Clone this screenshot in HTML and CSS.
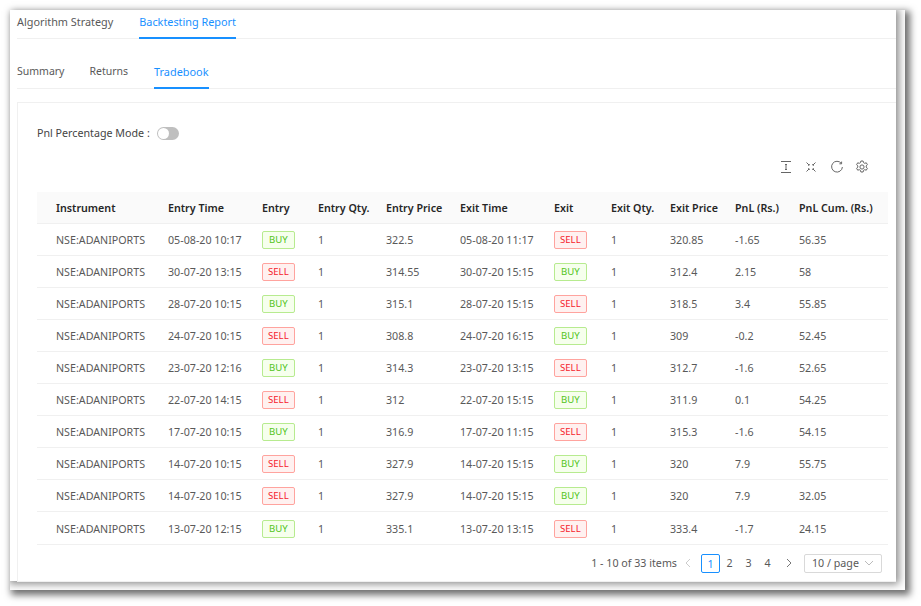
FILE: index.html
```html
<!DOCTYPE html>
<html lang="en">
<head>
  <meta charset="utf-8">
  <title>Tradebook</title>
  <link rel="stylesheet" href="styles.css">
</head>
<body>
  <div class="frame">
    <div class="window">
      <div class="tabs tabs-main">
        <a class="tab">Algorithm Strategy</a>
        <a class="tab active">Backtesting Report</a>
      </div>
      <div class="tabs tabs-sub">
        <a class="tab">Summary</a>
        <a class="tab">Returns</a>
        <a class="tab active">Tradebook</a>
      </div>
      <div class="card">
        <div class="mode-row">
          <span class="mode-label">Pnl Percentage Mode</span>
          <span class="colon">:</span>
          <span class="switch"><span class="knob"></span></span>
        </div>
        <div class="toolbar">
          <svg viewBox="0 0 14 14"><path d="M2 1.500h10M2 12.500h10M7 4v6M6 5l1-1 1 1M6 9l1 1 1-1"/></svg>
          <svg viewBox="0 0 14 14"><path d="M2.500 2.500l2.500 2.500M11.500 2.500 9 5M2.500 11.500 5 9M11.500 11.500 9 9M4 5.200h1.200V4M10 5.200H8.800V4M4 8.800h1.200V10M10 8.800H8.800V10"/></svg>
          <svg viewBox="0 0 14 14"><path d="M11.300 3.400A5.400 5.400 0 1 0 12.400 7M11.600 1.600v2.200H9.400"/></svg>
          <svg viewBox="0 0 14 14"><path d="M5.900 1h2.200l.4 1.600 1.200.7 1.600-.5 1.100 1.900-1.200 1.200v1.200l1.200 1.200-1.100 1.900-1.600-.5-1.200.7-.4 1.600H5.900l-.4-1.600-1.200-.7-1.600.5-1.100-1.900 1.200-1.200V5.900L1.600 4.700l1.100-1.900 1.600.5 1.200-.7z"/><circle cx="7" cy="7" r="2.100"/></svg>
        </div>
        <table class="trades">
          <thead>
            <tr><th>Instrument</th><th>Entry Time</th><th>Entry</th><th>Entry Qty.</th><th>Entry Price</th><th>Exit Time</th><th>Exit</th><th>Exit Qty.</th><th>Exit Price</th><th>PnL (Rs.)</th><th>PnL Cum. (Rs.)</th></tr>
          </thead>
          <tbody>
            <tr><td>NSE:ADANIPORTS</td><td>05-08-20 10:17</td><td><span class="tag buy">BUY</span></td><td>1</td><td>322.5</td><td>05-08-20 11:17</td><td><span class="tag sell">SELL</span></td><td>1</td><td>320.85</td><td>-1.65</td><td>56.35</td></tr>
            <tr><td>NSE:ADANIPORTS</td><td>30-07-20 13:15</td><td><span class="tag sell">SELL</span></td><td>1</td><td>314.55</td><td>30-07-20 15:15</td><td><span class="tag buy">BUY</span></td><td>1</td><td>312.4</td><td>2.15</td><td>58</td></tr>
            <tr><td>NSE:ADANIPORTS</td><td>28-07-20 10:15</td><td><span class="tag buy">BUY</span></td><td>1</td><td>315.1</td><td>28-07-20 15:15</td><td><span class="tag sell">SELL</span></td><td>1</td><td>318.5</td><td>3.4</td><td>55.85</td></tr>
            <tr><td>NSE:ADANIPORTS</td><td>24-07-20 10:15</td><td><span class="tag sell">SELL</span></td><td>1</td><td>308.8</td><td>24-07-20 16:15</td><td><span class="tag buy">BUY</span></td><td>1</td><td>309</td><td>-0.2</td><td>52.45</td></tr>
            <tr><td>NSE:ADANIPORTS</td><td>23-07-20 12:16</td><td><span class="tag buy">BUY</span></td><td>1</td><td>314.3</td><td>23-07-20 13:15</td><td><span class="tag sell">SELL</span></td><td>1</td><td>312.7</td><td>-1.6</td><td>52.65</td></tr>
            <tr><td>NSE:ADANIPORTS</td><td>22-07-20 14:15</td><td><span class="tag sell">SELL</span></td><td>1</td><td>312</td><td>22-07-20 15:15</td><td><span class="tag buy">BUY</span></td><td>1</td><td>311.9</td><td>0.1</td><td>54.25</td></tr>
            <tr><td>NSE:ADANIPORTS</td><td>17-07-20 10:15</td><td><span class="tag buy">BUY</span></td><td>1</td><td>316.9</td><td>17-07-20 11:15</td><td><span class="tag sell">SELL</span></td><td>1</td><td>315.3</td><td>-1.6</td><td>54.15</td></tr>
            <tr><td>NSE:ADANIPORTS</td><td>14-07-20 10:15</td><td><span class="tag sell">SELL</span></td><td>1</td><td>327.9</td><td>14-07-20 15:15</td><td><span class="tag buy">BUY</span></td><td>1</td><td>320</td><td>7.9</td><td>55.75</td></tr>
            <tr><td>NSE:ADANIPORTS</td><td>14-07-20 10:15</td><td><span class="tag sell">SELL</span></td><td>1</td><td>327.9</td><td>14-07-20 15:15</td><td><span class="tag buy">BUY</span></td><td>1</td><td>320</td><td>7.9</td><td>32.05</td></tr>
            <tr class="last-row"><td>NSE:ADANIPORTS</td><td>13-07-20 12:15</td><td><span class="tag buy">BUY</span></td><td>1</td><td>335.1</td><td>13-07-20 13:15</td><td><span class="tag sell">SELL</span></td><td>1</td><td>333.4</td><td>-1.7</td><td>24.15</td></tr>
          </tbody>
        </table>
        <div class="pager">
          <span class="total">1 - 10 of 33 items</span>
          <svg class="arrow prev" viewBox="0 0 10 10"><path d="M7 1 3 5l4 4"/></svg>
          <span class="page current">1</span>
          <span class="page">2</span>
          <span class="page">3</span>
          <span class="page">4</span>
          <svg class="arrow next" viewBox="0 0 10 10"><path d="M3 1l4 4-4 4"/></svg>
          <span class="size">10 / page<svg viewBox="0 0 10 10"><path d="M1 3l4 4 4-4"/></svg></span>
        </div>
      </div>
    </div>
  </div>
</body>
</html>
```
FILE: styles.css
```css
html, body {
  height: 100%;
  margin: 0;
}
body {
  background: #fff;
  padding: 10px;
  box-sizing: border-box;
  font-family: "Noto Sans", sans-serif;
  font-size: 10.7px;
  color: #595959;
  overflow: hidden;
}
.frame {
  width: 895px;
  height: 580px;
  background: #fff;
  box-shadow: 3px 3px 7px 2px #6f6f6f;
  overflow: hidden;
}
.window {
  width: 886px;
  height: 571px;
  padding-left: 7px;
  box-sizing: border-box;
  background: #fff;
  box-shadow: 1px 1px 8px 2px #8a8a8a;
}
.tabs {
  display: flex;
  border-bottom: 1px solid #f0f0f0;
}
.tab {
  display: block;
  box-sizing: border-box;
  border-bottom: 2px solid transparent;
  white-space: nowrap;
}
.tab.active {
  color: #1890ff;
  border-bottom-color: #1890ff;
}
.tabs-main {
  gap: 26px;
  height: 29px;
  box-sizing: border-box;
  font-size: 10.85px;
}
.tabs-main .tab {
  height: 29px;
  padding-top: 4px;
}
.tabs-sub {
  gap: 25px;
  height: 27px;
  box-sizing: border-box;
  margin-top: 23px;
  font-size: 10.5px;
}
.tabs-sub .tab {
  height: 27px;
  padding-top: 2px;
}
.tabs-sub .tab.active {
  margin-left: 1px;
  font-size: 10.9px;
}
.card {
  margin-top: 13px;
  border: 1px solid #f0f0f0;
  border-right: none;
  height: 480px;
  padding: 0 8px 0 19px;
  box-sizing: border-box;
}
.mode-row {
  display: flex;
  align-items: center;
  height: 16px;
  margin-top: 22px;
  color: #444;
}
.colon {
  margin: 0 7px 0 3px;
}
.switch {
  display: block;
  width: 22px;
  height: 13px;
  border-radius: 7px;
  background: #bfbfbf;
  position: relative;
}
.knob {
  position: absolute;
  left: 1px;
  top: 1px;
  width: 11px;
  height: 11px;
  border-radius: 50%;
  background: #fff;
}
.toolbar {
  display: flex;
  justify-content: flex-end;
  gap: 11.500px;
  height: 16px;
  margin-top: 19px;
  padding-right: 19px;
}
.toolbar svg {
  width: 14px;
  height: 14px;
  fill: none;
  stroke: #666;
}
.trades {
  margin-top: 16px;
  width: 851px;
  border-collapse: collapse;
  table-layout: fixed;
}
.trades th {
  height: 31px;
  padding: 0;
  background: #fafafa;
  border-bottom: 1px solid #f0f0f0;
  text-align: left;
  font-weight: 600;
  color: #262626;
}
.trades td {
  height: 31px;
  padding: 0;
  border-bottom: 1px solid #f0f0f0;
}
.trades .last-row td {
  height: 33px;
  padding-top: 1px;
  box-sizing: border-box;
}
.trades th:first-child,
.trades td:first-child { padding-left: 19px; }
.trades th:first-child { width: 112px; }
.trades th:nth-child(2) { width: 94px; }
.trades th:nth-child(3) { width: 56px; }
.trades th:nth-child(4) { width: 68px; }
.trades th:nth-child(5) { width: 74px; }
.trades th:nth-child(6) { width: 94px; }
.trades th:nth-child(7) { width: 57px; }
.trades th:nth-child(8) { width: 59px; }
.trades th:nth-child(9) { width: 65px; }
.trades th:nth-child(10) { width: 64px; }
.tag {
  display: inline-block;
  height: 16px;
  line-height: 16px;
  padding: 0 5px;
  border: 1px solid;
  border-radius: 2px;
  font-size: 9.6px;
}
.tag.buy {
  color: #52c41a;
  background: #f6ffed;
  border-color: #b7eb8f;
  padding: 0 6px;
}
.tag.sell {
  color: #f5222d;
  background: #fff1f0;
  border-color: #ffa39e;
}
.pager {
  display: flex;
  align-items: center;
  justify-content: flex-end;
  height: 20px;
  margin-top: 8px;
  padding-right: 6px;
}
.total {
  margin-right: 6px;
}
.arrow {
  width: 10px;
  height: 10px;
  fill: none;
  stroke: #777;
}
.arrow.prev {
  stroke: #ccc;
  margin-right: 8px;
}
.arrow.next {
  margin: 0 5px 0 7px;
}
.page {
  width: 19px;
  height: 19px;
  line-height: 18px;
  text-align: center;
  box-sizing: border-box;
}
.page.current {
  color: #1890ff;
  border: 1px solid #1890ff;
  border-radius: 2px;
}
.size {
  display: flex;
  align-items: center;
  justify-content: space-between;
  width: 78px;
  height: 19px;
  margin-left: 5px;
  padding: 0 7px;
  box-sizing: border-box;
  border: 1px solid #d9d9d9;
  border-radius: 2px;
}
.size svg {
  width: 10px;
  height: 10px;
  fill: none;
  stroke: #bbb;
}
```
